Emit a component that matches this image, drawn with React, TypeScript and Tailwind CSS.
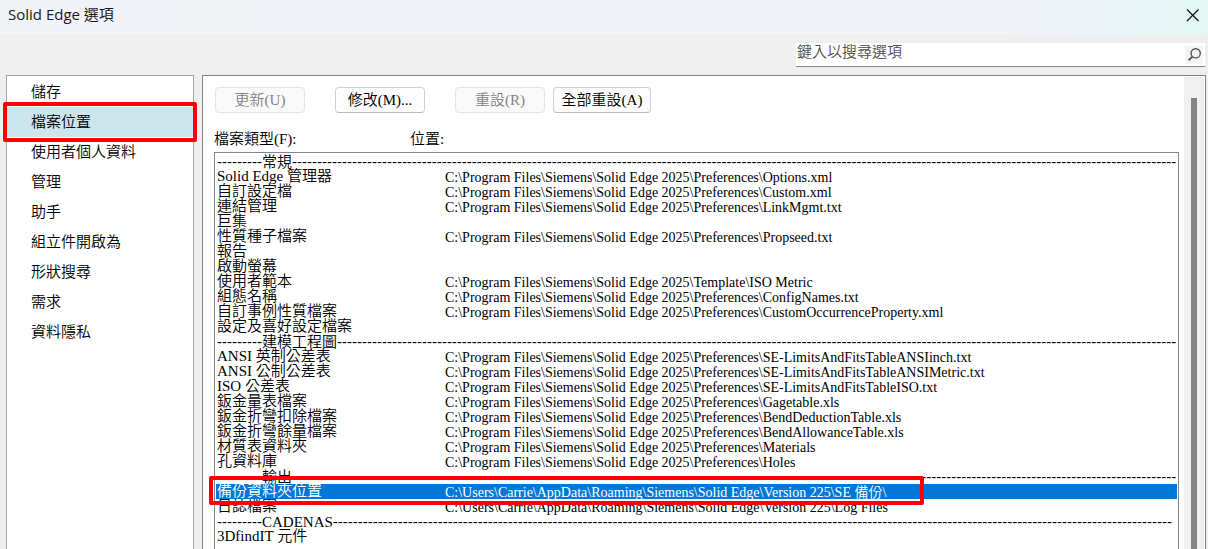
import React, { useState } from "react";

type FileRow = {
  name: string;
  path?: string;
  // number of dashes drawn after a section title
  dashes?: number;
};

const categories = [
  "儲存",
  "檔案位置",
  "使用者個人資料",
  "管理",
  "助手",
  "組立件開啟為",
  "形狀搜尋",
  "需求",
  "資料隱私",
];

const prefs = "C:\\Program Files\\Siemens\\Solid Edge 2025\\Preferences\\";
const roaming = "C:\\Users\\Carrie\\AppData\\Roaming\\Siemens\\Solid Edge\\Version 225\\";

const rows: FileRow[] = [
  { name: "常規", dashes: 177 },
  { name: "Solid Edge 管理器", path: prefs + "Options.xml" },
  { name: "自訂設定檔", path: prefs + "Custom.xml" },
  { name: "連結管理", path: prefs + "LinkMgmt.txt" },
  { name: "巨集" },
  { name: "性質種子檔案", path: prefs + "Propseed.txt" },
  { name: "報告" },
  { name: "啟動螢幕" },
  {
    name: "使用者範本",
    path: "C:\\Program Files\\Siemens\\Solid Edge 2025\\Template\\ISO Metric",
  },
  { name: "組態名稱", path: prefs + "ConfigNames.txt" },
  { name: "自訂事例性質檔案", path: prefs + "CustomOccurrenceProperty.xml" },
  { name: "設定及喜好設定檔案" },
  { name: "建模工程圖", dashes: 168 },
  { name: "ANSI 英制公差表", path: prefs + "SE-LimitsAndFitsTableANSIinch.txt" },
  { name: "ANSI 公制公差表", path: prefs + "SE-LimitsAndFitsTableANSIMetric.txt" },
  { name: "ISO 公差表", path: prefs + "SE-LimitsAndFitsTableISO.txt" },
  { name: "鈑金量表檔案", path: prefs + "Gagetable.xls" },
  { name: "鈑金折彎扣除檔案", path: prefs + "BendDeductionTable.xls" },
  { name: "鈑金折彎餘量檔案", path: prefs + "BendAllowanceTable.xls" },
  { name: "材質表資料夾", path: prefs + "Materials" },
  { name: "孔資料庫", path: prefs + "Holes" },
  { name: "輸出", dashes: 177 },
  { name: "備份資料夾位置", path: roaming + "SE 備份\\" },
  { name: "日誌檔案", path: roaming + "Log Files" },
  { name: "CADENAS", dashes: 168 },
  { name: "3DfindIT 元件" },
];

const TitleBar = () => (
  <header className="flex h-[34px] shrink-0 items-center justify-between bg-linear-to-r from-[#f1f3f8] from-80% via-[#ecf3fa] via-90% to-[#e3f8f5] px-2">
    <h1 className="pb-[6px] font-['Open_Sans','Noto_Sans_CJK_TC',sans-serif] text-[15px] leading-5 font-normal text-[#1a1a1a]">
      Solid Edge 選項
    </h1>
    <button type="button" aria-label="關閉" className="pb-1">
      <svg width="14" height="14" viewBox="0 0 14 14" className="block">
        <path d="M1 1.5 12.5 13M12.5 1.5 1 13" stroke="#111" strokeWidth="1.2" fill="none" />
      </svg>
    </button>
  </header>
);

const SearchBox = () => {
  const [query, setQuery] = useState("");

  return (
    <div className="flex shrink-0 justify-end pt-[9px] pr-[3px] pb-2">
      <div className="flex h-6 w-[409px] border-b border-[#868686] bg-white">
        <input
          type="text"
          aria-label="鍵入以搜尋選項"
          placeholder="鍵入以搜尋選項"
          value={query}
          onChange={(e) => setQuery(e.target.value)}
          className="min-w-0 flex-1 pb-[6px] pl-px leading-4 outline-none placeholder:text-[#4f4f4f]"
        />
        <button
          type="button"
          aria-label="搜尋"
          className="mt-[3px] mr-[2px] h-[18px] w-[18px] bg-[#f4f4f4]"
        >
          <svg width="18" height="18" viewBox="0 0 18 18" fill="none" stroke="#555">
            <circle cx="10.7" cy="7.3" r="4.6" strokeWidth="1.4" />
            <path d="M7.4 10.6 3.6 14.2" strokeWidth="1.9" />
          </svg>
        </button>
      </div>
    </div>
  );
};

const PushButton = ({
  label,
  disabled,
  className,
}: {
  label: string;
  disabled?: boolean;
  className: string;
}) => (
  <button
    type="button"
    disabled={disabled}
    className={`h-[26px] rounded border text-center leading-5 ${className} ${
      disabled
        ? "border-[#e6e6e6] bg-[#f9f9f9] text-[#838383]"
        : "border-[#d0d0d0] border-b-[#bababa] bg-[#fdfdfd] text-black"
    }`}
  >
    {label}
  </button>
);

const Dashes = ({ count }: { count: number }) => (
  <span className="font-['Liberation_Sans',sans-serif]">{"-".repeat(count)}</span>
);

const FileTable = () => {
  const [selected, setSelected] = useState("備份資料夾位置");

  return (
    <div className="flex-1 border border-b-0 border-[#7f868f] p-px">
      <table
        aria-labelledby="file-types"
        className="w-full table-fixed border-collapse whitespace-pre"
      >
        <colgroup>
          <col className="w-[229px]" />
          <col />
        </colgroup>
        <tbody>
          {rows.map((row) =>
            row.dashes ? (
              <tr key={row.name}>
                <td colSpan={2} className="p-0 pl-px">
                  <div className="h-[15px] overflow-hidden leading-[15px]">
                    <Dashes count={9} />
                    {row.name}
                    <Dashes count={row.dashes} />
                  </div>
                </td>
              </tr>
            ) : (
              <tr
                key={row.name}
                onClick={() => setSelected(row.name)}
                className={
                  row.name === selected ? "relative bg-[#0078d7] text-white" : "text-black"
                }
              >
                <td className="p-0 pl-px">
                  <div className="h-[15px] leading-[15px]">{row.name}</div>
                </td>
                <td className="p-0">
                  <div className="h-[15px] text-[14px] leading-[17px]">{row.path}</div>
                  {row.name === selected && (
                    <div className="pointer-events-none absolute -top-2 -left-[7px] h-[29px] w-[715px] rounded-xs border-4 border-[#ff0000]" />
                  )}
                </td>
              </tr>
            ),
          )}
        </tbody>
      </table>
    </div>
  );
};

const App = () => {
  const [active, setActive] = useState("檔案位置");

  return (
    <div className="flex h-screen flex-col overflow-hidden bg-[#efefef] font-['Liberation_Serif','Noto_Sans_CJK_TC',serif] text-[15px] font-[350] text-black">
      <TitleBar />
      <SearchBox />
      <div className="flex min-h-0 flex-1 gap-2 pr-[2px] pl-[6px]">
        <nav className="w-[188px] shrink-0 border border-b-0 border-[#a5a5a5] bg-white pt-px">
          {categories.map((item) => (
            <div key={item} className="relative">
              <button
                type="button"
                onClick={() => setActive(item)}
                className={`block h-[30px] w-full pl-6 text-left leading-5 ${
                  item === active ? "bg-[#cce5ea]" : ""
                }`}
              >
                {item}
              </button>
              {item === active && (
                <div className="pointer-events-none absolute -inset-x-1 -inset-y-[5px] rounded-xs border-4 border-[#ff0000]" />
              )}
            </div>
          ))}
        </nav>

        <main className="flex min-w-0 flex-1 border border-b-0 border-[#83838f] bg-white">
          <div className="flex min-w-0 flex-1 flex-col pt-[11px] pr-[5px] pl-[11px]">
            <div className="flex pl-px">
              <PushButton label="更新(U)" disabled className="w-[90px]" />
              <PushButton label="修改(M)..." className="ml-[30px] w-[90px]" />
              <PushButton label="重設(R)" disabled className="ml-[30px] w-[90px]" />
              <PushButton label="全部重設(A)" className="ml-2 w-[98px]" />
            </div>
            <div className="mt-4 mb-[3px] flex leading-5">
              <span id="file-types" className="w-[196px]">
                檔案類型(F):
              </span>
              <span>位置:</span>
            </div>
            <FileTable />
          </div>
          <div className="mt-px mr-px flex w-5 justify-center bg-[#f0f0f0] pt-[21px]">
            <div className="w-[6px] bg-[#858585]" />
          </div>
        </main>
      </div>
    </div>
  );
};

export default App;
